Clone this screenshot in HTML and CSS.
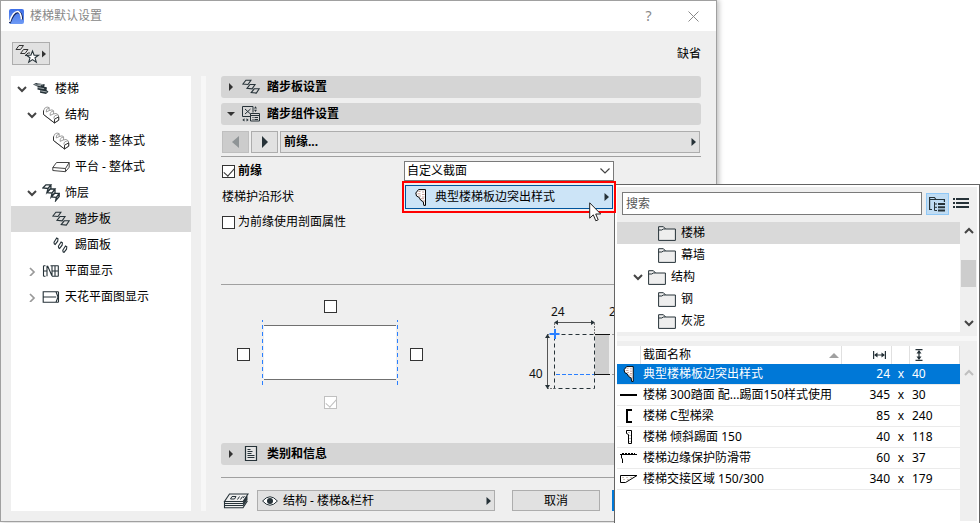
FILE: index.html
```html
<!DOCTYPE html>
<html lang="zh-CN">
<head>
<meta charset="UTF-8">
<meta name="viewport" content="width=device-width, initial-scale=1.0">
<title>楼梯默认设置</title>
<link rel="stylesheet" href="styles.css">
</head>

<body>

<!-- ICONS -->
<svg class="defs" width="0" height="0">
  <symbol id="tread" viewBox="0 0 18 16">
    <path d="M.9 5L3.900 1.200h5L6 5.500zM5 9.300l3-3.800h5l-2.900 4.300zM9.200 13.600l3-3.800h5l-2.900 4.300z" fill="none" stroke="currentColor" stroke-width="1.100"/>
  </symbol>
  <symbol id="riser" viewBox="0 0 18 16">
    <path d="M2 5.300L4.700 1l1.300.8-.3 2.400L3.200 7.400l-.9-.6zM6.400 9.300L9.100 5l1.300.8-.3 2.400-2.500 3.200-.9-.6zM10.800 13.300L13.500 9l1.300.8-.3 2.400-2.500 3.200-.9-.6z" fill="none" stroke="currentColor" stroke-width="1.100"/>
  </symbol>
  <symbol id="finish" viewBox="0 0 18 18">
    <path d="M.9 4L3.900.8h5L6 4.500zM5 8.600l3-3.600h5l-2.900 4zM9.200 13l3-3.600h5l-2.900 4zM6 4.500L5 8.600l3.900-4.200V.8M10.100 9l-.9 4 3.800-4V5M14.300 13.400l-.6 3.200 3.500-4.200v-3" fill="none" stroke="currentColor" stroke-width="1.300"/>
  </symbol>
  <symbol id="stair" viewBox="0 0 18 16">
    <path d="M1 3.500L4 2l9 1.500-1 2 3 1-.5 2.500 2 1.800L14 13l-6-1.200.4-2.600-3-.8.400-2.700z" fill="#263238"/>
    <path d="M2.500 3.600l6.500 1.200M6.200 6.600l6 1.100M8.800 9.900l6 1.100M5.500 2.900l5.500 1" stroke="#c4cacc" stroke-width=".8"/>
  </symbol>
  <symbol id="structure" viewBox="0 0 18 18">
    <path d="M1.500 5Q2 1.500 5 1l2.200.6v3L10 3.800l1.600 1V8l2.500-.6L16.500 9v5l-4 3-11-8.500z" fill="#fff" stroke="#888" stroke-width=".8"/>
    <path d="M7 2Q3.800 2.500 4.200 6M11.500 5Q7.700 5.500 8.200 9.400M15.900 9Q11.500 9 12 12.600M4.200 6L7.200 4.600M8.200 9.400l3.400-1.600" fill="none" stroke="#888" stroke-width=".8"/>
    <path d="M1.500 4.500V8.500L12.500 17 16.800 14.200V10.800L12.500 13.200V17" fill="none" stroke="#333"/>
  </symbol>
  <symbol id="landing" viewBox="0 0 18 12">
    <path d="M.8 6.500L4.500 1.500h12.700L13.500 7.500zM.8 6.500v3l12.700 1.200V7.500M13.500 10.700l3.700-4.500V1.500" fill="none" stroke="#444"/>
  </symbol>
  <symbol id="plan" viewBox="0 0 17 12">
    <path d="M1 .8v10.400M4.500.8v10.400M1 6h3.500M1 .8h2M1 11.200h2M9.500.8v10.400M12.500.8v10.400M15.800.8v10.400M8 .8h8M9.500 6h6.300M9.500 11.200h6.500M5 .8l4.300 9.700" fill="none" stroke="currentColor" stroke-width="1.100"/>
  </symbol>
  <symbol id="ceiling" viewBox="0 0 17 12">
    <path d="M16 .7H.7v10.600H16M.7 6h13M13.500.7L15.500 6l-2 5.300M16 .7v10.600" fill="none" stroke="currentColor" stroke-width="1.100"/>
  </symbol>
  <symbol id="down" viewBox="0 0 10 10">
    <path d="M1 3l4 4 4-4" fill="none" stroke="currentColor" stroke-width="2"/>
  </symbol>
  <symbol id="closed" viewBox="0 0 10 10">
    <path d="M3 2l4 4-4 4" fill="none" stroke="currentColor" stroke-width="1.700"/>
  </symbol>
  <symbol id="right" viewBox="0 0 5 8"><path d="M.5 0v8L5 4z" fill="currentColor"/></symbol>
  <symbol id="folder" viewBox="0 0 18 15">
    <path d="M.6 14.400V.7h4.800L7.600 3h9.800v11.400z" fill="#eee" stroke="#263238"/>
    <path d="M.6 4h3.200l1.500-1h2.300" fill="none" stroke="#263238"/>
  </symbol>
  <symbol id="nosing" viewBox="0 0 12 17">
    <path d="M10.500.6v15.800H8.800L8.300 12.800 5.500 11 4.300 8.500 1.500 7 .8 4 3.500.6z" fill="#fff" stroke="#000"/>
    <path d="M3.500 2.500h2M7 3h2M2.500 4.800h3M7 5.500h2.500M3.500 7h2.500M7 8h2.500M6 9.700h3M8 12h2" fill="none" stroke="#b98a80" stroke-width=".8"/>
  </symbol>
</svg>

<main class="dialog">
  <header class="titlebar">
    <svg class="logo" width="15" height="15" viewBox="0 0 15 15">
      <defs><linearGradient id="blue" x2="0" y2="1"><stop stop-color="#3d6fe8"/><stop offset="1" stop-color="#6f9bf5"/></linearGradient></defs>
      <rect width="15" height="15" rx="2" fill="url(#blue)"/>
      <path d="M.5 14Q5 2.500 9.500 3.200q3 .8 3.500 7.300" fill="none" stroke="#12225c" stroke-width="2.400"/>
      <path d="M.5 13Q4 2 9 2.500q3 .8 3.400 8" fill="none" stroke="#fff" stroke-width="1.600"/>
    </svg>
    <h1>楼梯默认设置</h1>
    <button class="win-btn" aria-label="帮助">?</button>
    <button class="win-btn" aria-label="关闭">
      <svg width="11" height="11" viewBox="0 0 11 11"><path d="M.5.5l10 10M10.500.5l-10 10" stroke="#888"/></svg>
    </button>
  </header>

  <div class="toolbar">
    <button class="fav-btn" aria-label="收藏夹">
      <svg width="34" height="20" viewBox="0 0 34 20">
        <path d="M3 5.500L6 1.500h4.500l-3 4zM7.500 9.500l3-4H15l-3 4zM12 12l3-3h2" fill="none" stroke="#333"/>
        <path d="M19.500 7l1.600 4.200h4.400l-3.500 2.600 1.300 4.400-3.800-2.600-3.800 2.600 1.300-4.400-3.500-2.600h4.400z" fill="#fff" stroke="#263238" stroke-width="1.100"/>
        <path d="M29 6.500v7l4-3.500z" fill="#333"/>
      </svg>
    </button>
    <span>缺省</span>
  </div>

  <div class="body">
    <nav class="tree">
      <a href="#" class="node"><svg class="chev"><use href="#down"/></svg><svg class="ico"><use href="#stair"/></svg>楼梯</a>
      <a href="#" class="node lv1"><svg class="chev"><use href="#down"/></svg><svg class="ico tall"><use href="#structure"/></svg>结构</a>
      <a href="#" class="node lv2"><svg class="ico tall"><use href="#structure"/></svg>楼梯 - 整体式</a>
      <a href="#" class="node lv2"><svg class="ico flat"><use href="#landing"/></svg>平台 - 整体式</a>
      <a href="#" class="node lv1"><svg class="chev"><use href="#down"/></svg><svg class="ico tall"><use href="#finish"/></svg>饰层</a>
      <a href="#" class="node lv2 active"><svg class="ico"><use href="#tread"/></svg>踏步板</a>
      <a href="#" class="node lv2"><svg class="ico"><use href="#riser"/></svg>踢面板</a>
      <a href="#" class="node lv1"><svg class="chev closed"><use href="#closed"/></svg><svg class="ico flat"><use href="#plan"/></svg>平面显示</a>
      <a href="#" class="node lv1"><svg class="chev closed"><use href="#closed"/></svg><svg class="ico flat"><use href="#ceiling"/></svg>天花平面图显示</a>
    </nav>
    <div class="splitter"></div>

    <div class="content">
      <button class="section">
        <svg class="mark" viewBox="0 0 8 8"><path d="M2 0v8l4-4z"/></svg>
        <svg class="ico"><use href="#tread"/></svg>踏步板设置
      </button>
      <button class="section">
        <svg class="mark" viewBox="0 0 8 8"><path d="M0 2h8L4 6z"/></svg>
        <svg class="ico tall" viewBox="0 0 18 18">
          <path d="M8 11.500H.5v-10h10.500v6M3 4l5.500 5M8.500 4L3 9M8.500 8.500h9v7.500h-9zM8.500 10.500h9M10.500 12.500h1M12.500 12.500h3.500M10.500 14.500h1M12.500 14.500h3.500" fill="none" stroke="#263238"/>
          <path d="M12 3.500l1.500-2.200L15 3.500zM12 4.800l1.500 2.200L15 4.800zM2.500 13.200v3.400L.3 15zM4.500 13.200v3.400L6.700 15z" fill="#263238"/>
        </svg>踏步组件设置
      </button>

      <div class="pager">
        <button disabled aria-label="上一个"><svg width="8" height="12" viewBox="0 0 8 12"><path d="M7 0v12L0 6z" fill="#8f9496"/></svg></button>
        <button aria-label="下一个"><svg width="8" height="12" viewBox="0 0 8 12"><path d="M1 0v12l6-6z" fill="#263238"/></svg></button>
        <button class="page-name">前缘...<svg class="arrow"><use href="#right"/></svg></button>
      </div>

      <div class="form">
        <label class="check bold"><input type="checkbox" checked>前缘</label>
        <div class="select">
          <select aria-label="前缘"><option>自定义截面</option></select>
          <svg width="10" height="6" viewBox="0 0 10 6"><path d="M.5.5L5 5 9.500.5" fill="none" stroke="#444" stroke-width="1.200"/></svg>
        </div>
        <label class="caption" for="profile">楼梯护沿形状</label>
        <div class="picker">
          <button id="profile"><svg width="12" height="17"><use href="#nosing"/></svg>典型楼梯板边突出样式<svg class="arrow"><use href="#right"/></svg></button>
          <svg class="cursor" width="13" height="20" viewBox="0 0 13 20"><path d="M.7.8v15.400l3.600-3.400 2.500 6 2.400-1-2.500-5.800h5z" fill="#fff" stroke="#222"/></svg>
        </div>
        <label class="check wide"><input type="checkbox">为前缘使用剖面属性</label>
      </div>

      <div class="diagram">
        <div class="edges">
          <input class="top" type="checkbox" aria-label="后边">
          <input type="checkbox" aria-label="左边">
          <svg viewBox="0 0 136 69" width="136" height="69">
            <path d="M2 5h132v55H2z" fill="#fff"/>
            <path d="M2 5.500h132M2 59.500h132" stroke="#707070"/>
            <path d="M.5 0v65M135.500 0v65" stroke="#2a7fff" stroke-dasharray="4 3" stroke-dashoffset="2"/>
          </svg>
          <input type="checkbox" aria-label="右边">
          <input class="bottom" type="checkbox" checked disabled aria-label="前边">
        </div>
        <svg class="profile" width="174" height="109" viewBox="0 0 174 109">
          <path d="M69 35h14v40H69z" fill="#cfcfcf"/>
          <path d="M28.500 23v11M68.500 23v11M21 34.500h7M21 88.500h7" stroke="#777" stroke-dasharray="2 1"/>
          <path d="M28.500 34.500h40v54h-40z" fill="none" stroke="#263238" stroke-dasharray="4 3"/>
          <path d="M30 74.500h38" stroke="#2a7fff" stroke-dasharray="4 2"/>
          <path d="M69 34.500h15M69 74.500h15" stroke="#111"/>
          <path d="M86 34.500h5M86 74.500h5" stroke="#999" stroke-dasharray="2 1"/>
          <path d="M30 22.500h37M21.500 37v49" stroke="#555"/>
          <path d="M28 22.500l4-2.500v5zM69 22.500l-4-2.500v5zM21.500 34l-2.500 4h5zM21.500 89l-2.500-4h5z" fill="#263238"/>
          <path d="M23.500 34h10M29 29v10" stroke="#2a7fff" stroke-width="2"/>
          <text x="25" y="16">24</text><text x="3" y="78">40</text><text x="83" y="16">2</text>
        </svg>
      </div>

      <button class="section info">
        <svg class="mark" viewBox="0 0 8 8"><path d="M2 0v8l4-4z"/></svg>
        <svg class="ico tall" viewBox="0 0 18 18"><path d="M3.500 1.500h11v14h-11z" fill="#e4e4e4" stroke="#263238" stroke-width="1.200"/><path d="M5.500 4.500h3M5.500 6.500h5M5.500 8.500h4M5.500 10.500h7M5.500 12.500h7" stroke="#263238"/></svg>类别和信息
      </button>

      <footer class="actions">
        <svg width="26" height="16" viewBox="0 0 26 16">
          <path d="M6.500 1h18.500l-5 7.500H1.500zM1.500 8.500v2h18.500l4.500-7M1.500 10.500v2h18.500l4.500-7M1.500 12.500v2.300h18.500l4.500-7" fill="none" stroke="#263238" stroke-width="1.100"/>
          <path d="M9 3.500h4L11.500 6h-4zM14.500 6.500l2-3M17.500 6.500l2-3M20 5l1.500-2" fill="none" stroke="#263238"/>
        </svg>
        <button class="layer">
          <svg width="16" height="10" viewBox="0 0 16 10"><path d="M.6 5Q8-3.500 15.400 5 8 13.500.6 5z" fill="#fff" stroke="#263238"/><circle cx="8" cy="5" r="3" fill="#263238"/></svg>
          结构 - 楼梯&amp;栏杆<svg class="arrow"><use href="#right"/></svg>
        </button>
        <button class="cancel">取消</button>
        <button class="ok" aria-label="确定"></button>
      </footer>
    </div>
  </div>
</main>

<!-- PROFILE POPUP -->
<aside class="popup">
  <div class="search">
    <input type="text" placeholder="搜索" aria-label="搜索">
    <button class="view on" aria-label="树状视图">
      <svg width="17" height="16" viewBox="0 0 17 16"><path d="M3 13.500H.6V1.500h4.800l1.600 2h8.400v2.500M.6 3.500h6" fill="none" stroke="#263238" stroke-width="1.200"/><path d="M5.500 6v8.500h2.500M5.500 8h2.500M5.500 11.300h2.500" fill="none" stroke="#263238"/><path d="M9 8h7M9 11.300h7M9 14.500h7" stroke="#263238" stroke-width="2"/></svg>
    </button>
    <button class="view" aria-label="列表视图">
      <svg width="16" height="12" viewBox="0 0 16 12"><path d="M0 1h2M3 1h13M0 5h2M3 5h13M0 9h2M3 9h13" stroke="#263238" stroke-width="2"/></svg>
    </button>
  </div>

  <div class="pane">
    <div class="folders">
      <a href="#" class="folder sub active"><svg class="fold"><use href="#folder"/></svg>楼梯</a>
      <a href="#" class="folder sub"><svg class="fold"><use href="#folder"/></svg>幕墙</a>
      <a href="#" class="folder"><svg class="chev"><use href="#down"/></svg><svg class="fold"><use href="#folder"/></svg>结构</a>
      <a href="#" class="folder sub"><svg class="fold"><use href="#folder"/></svg>钢</a>
      <a href="#" class="folder sub"><svg class="fold"><use href="#folder"/></svg>灰泥</a>
    </div>
    <div class="scroll">
      <svg class="chev flip"><use href="#down"/></svg>
      <div class="thumb"></div>
      <svg class="chev"><use href="#down"/></svg>
    </div>
  </div>
  <div class="bar"></div>

  <div class="pane list">
    <div class="rows">
      <table>
        <colgroup><col class="c-icon"><col><col class="c-w"><col class="c-x"><col class="c-h"></colgroup>
        <thead>
          <tr>
            <th></th>
            <th><div class="sort">截面名称<svg width="10" height="5" viewBox="0 0 10 5"><path d="M5 0l5 5H0z" fill="#a0a0a0"/></svg></div></th>
            <th class="num"><svg width="13" height="8" viewBox="0 0 13 8"><path d="M.6 0v8M12.400 0v8M2 4h9" stroke="#263238" stroke-width="1.200"/><path d="M1 4l3.500-2.500v5zM12 4L8.500 1.500v5z" fill="#263238"/></svg></th>
            <th></th>
            <th class="height"><svg width="8" height="12" viewBox="0 0 8 12"><path d="M.5.700h7M.5 11.300h7M4 2v8" stroke="#263238" stroke-width="1.200"/><path d="M4 1L1.500 4.500h5zM4 11L1.500 7.500h5z" fill="#263238"/></svg></th>
          </tr>
        </thead>
        <tbody>
          <tr class="active"><td><svg width="12" height="16"><use href="#nosing"/></svg></td><td>典型楼梯板边突出样式</td><td class="num">24</td><td class="x">x</td><td>40</td></tr>
          <tr><td><svg width="18" height="16" viewBox="0 0 18 16"><path d="M0 8h17" stroke="#000" stroke-width="2"/></svg></td><td>楼梯 300踏面 配...踢面150样式使用</td><td class="num">345</td><td class="x">x</td><td>30</td></tr>
          <tr><td><svg width="18" height="16" viewBox="0 0 18 16"><path d="M12 2H7v12h5" fill="none" stroke="#000" stroke-width="2"/></svg></td><td>楼梯 C型梯梁</td><td class="num">85</td><td class="x">x</td><td>240</td></tr>
          <tr><td><svg width="18" height="16" viewBox="0 0 18 16"><path d="M6.500 1.500h5v13h-3v-9l-2-1z" fill="#fff" stroke="#000"/><path d="M8.500 3.500h2M10 6v7" stroke="#777" stroke-dasharray="1 2"/></svg></td><td>楼梯 倾斜踢面 150</td><td class="num">40</td><td class="x">x</td><td>118</td></tr>
          <tr><td><svg width="18" height="16" viewBox="0 0 18 16"><path d="M0 4.500h17M1.500 4v4l1 1v4" fill="none" stroke="#000"/><path d="M2 3.500h13" stroke="#000" stroke-dasharray="2 1"/></svg></td><td>楼梯边缘保护防滑带</td><td class="num">60</td><td class="x">x</td><td>37</td></tr>
          <tr><td><svg width="18" height="16" viewBox="0 0 18 16"><path d="M.5 4.500h16.500L5.500 11.500h-5z" fill="#fff" stroke="#000"/><path d="M2.500 6.500h9M3.500 8.500h5" stroke="#a08870" stroke-dasharray="1 3"/></svg></td><td>楼梯交接区域 150/300</td><td class="num">340</td><td class="x">x</td><td>179</td></tr>
        </tbody>
      </table>
    </div>
    <div class="scroll off"><svg class="chev flip"><use href="#down"/></svg></div>
  </div>
</aside>

</body>
</html>
```

FILE: styles.css
```css
*{box-sizing:border-box;}

body{
    margin:0;
    min-height:100vh;
    position:relative;
    overflow:hidden;
    background:#fff;
    color:#000;
    font:12px/16px "Noto Sans","Noto Sans CJK SC",sans-serif;
}

button,input,select{
    margin:0;
    font:inherit;
    color:inherit;
}

button{
    padding:0;
    border:1px solid #adadad;
    background:#e1e1e1;
}

a{
    color:inherit;
    text-decoration:none;
}

svg{
    flex:none;
    display:block;
    color:#263238;
}

.defs{position:absolute;}

/* DIALOG */
.dialog{
    width:calc(100% - 263px);
    min-height:calc(100vh - 1px);
    display:flex;
    flex-direction:column;
    background:#efefef;
    border:1px solid #a0a0a0;
    box-shadow:2px 0 5px rgba(0,0,0,0.25);
}

.titlebar{
    display:flex;
    align-items:center;
    height:30px;
    padding-left:8px;
    background:#fff;
    color:#888;
}

.titlebar h1{
    flex:1;
    margin:0 0 0 6px;
    font-size:12px;
    font-weight:normal;
}

.win-btn{
    display:flex;
    justify-content:center;
    align-items:center;
    width:45px;
    height:28px;
    border:0;
    background:none;
    font-size:14px;
}

.toolbar{
    display:flex;
    justify-content:space-between;
    align-items:center;
    height:45px;
    padding:0 15px 0 11px;
}

.fav-btn{
    display:flex;
    align-items:center;
    width:38px;
    height:23px;
}

.body{
    flex:1;
    display:flex;
    padding:0 15px 10px 10px;
}

/* TREE */
.tree{
    width:180px;
    background:#fff;
}

.node{
    display:flex;
    align-items:center;
    height:26px;
    padding-left:6px;
}

.node.lv1{padding-left:16px;}
.node.lv2{padding-left:41px;}

.chev{
    width:10px;
    height:10px;
    color:#444;
}

.closed{color:#999;}

.ico{
    width:18px;
    height:16px;
    margin-right:5px;
}

.chev + .ico{margin-left:5px;}

.tall{height:18px;}
.flat{height:12px;}

.active{background:#d9d9d9;}

.splitter{
    width:5px;
    margin:0 15px 0 10px;
    background:#f7f7f7;
}

/* CONTENT */
.content{
    flex:1;
    min-width:0;
    display:flex;
    flex-direction:column;
}

.section{
    display:flex;
    align-items:center;
    width:100%;
    height:22px;
    margin-bottom:5px;
    padding-left:6px;
    border:0;
    border-radius:3px;
    background:#d5d5d5;
    font-weight:bold;
}

.section .ico{margin:0 7px 0 7px;}

.mark{
    width:8px;
    height:8px;
    fill:#333;
}

.pager{
    display:flex;
    gap:2px;
    padding:1px 1px 3px;
    border-bottom:1px solid #a0a0a0;
}

.pager button{
    display:flex;
    justify-content:center;
    align-items:center;
    width:27px;
    height:22px;
}

.pager button:disabled{
    background:#ccc;
    border-color:#bfbfbf;
}

.pager .page-name{
    flex:1;
    justify-content:space-between;
    padding:0 3px;
    font-weight:bold;
}

.arrow{
    width:5px;
    height:8px;
}

.form{
    display:grid;
    grid-template-columns:182px 1fr 87px;
    grid-template-rows:20px 24px 18px;
    row-gap:4px;
    align-items:center;
    padding:4px 0 53px 1px;
    border-bottom:1px solid #a0a0a0;
}

.check{
    display:flex;
    align-items:center;
    gap:3px;
}

.caption{grid-column:1;}
.wide{grid-column:1 / 3;}
.bold{font-weight:bold;}

input[type="checkbox"]{
    appearance:none;
    display:block;
    width:13px;
    height:13px;
    border:1px solid #333;
    background:#fff;
}

input[type="checkbox"]:checked::before{
    content:"";
    display:block;
    width:9px;
    height:5px;
    margin:2px 0 0 1px;
    border:solid #333;
    border-width:0 0 1px 1px;
    transform:rotate(-48deg);
}

input[type="checkbox"]:disabled,
input[type="checkbox"]:disabled::before{
    border-color:#c0c0c0;
}

.select{
    display:grid;
    align-items:center;
}

.select select{
    grid-area:1 / 1;
    appearance:none;
    width:100%;
    height:20px;
    padding:0 2px;
    border:1px solid #7a7a7a;
    border-radius:0;
    background:#fff;
}

.select svg{
    grid-area:1 / 1;
    justify-self:end;
    margin-right:4px;
    pointer-events:none;
}

.picker{
    position:relative;
    padding:0 1px;
}

.picker button{
    display:flex;
    align-items:center;
    gap:8px;
    width:100%;
    height:24px;
    padding:0 3px 0 9px;
    border-color:#00549c;
    background:#cce4f7;
}

.picker .arrow{margin-left:auto;}

.picker::after{
    content:"";
    position:absolute;
    inset:-4px -2px;
    border:2px solid #f00;
    z-index:2;
    pointer-events:none;
}

.cursor{
    position:absolute;
    right:12px;
    top:17px;
    z-index:3;
}

/* DIAGRAM */
.diagram{
    display:flex;
    gap:103px;
    padding:15px 0 34px 16px;
    overflow:hidden;
}

.edges{
    display:grid;
    grid-template-columns:13px 136px 13px;
    gap:7px 12px;
    align-items:center;
    justify-items:center;
}

.edges .top,
.edges .bottom{
    grid-column:1 / 4;
}

.profile text{
    font-size:12px;
    fill:#111;
}

.info{margin-bottom:12px;}

.actions{
    display:flex;
    align-items:center;
    padding:12px 0 0 2px;
    border-top:1px solid #a0a0a0;
}

.actions button{height:21px;}

.actions .layer{
    display:flex;
    align-items:center;
    gap:5px;
    width:238px;
    margin:0 17px 0 8px;
    padding:0 3px 0 4px;
}

.layer .arrow{margin-left:auto;}

.actions .cancel{
    width:88px;
    margin-right:12px;
}

.actions .ok{
    flex:1;
    border-color:#0078d7;
    background:#0078d7;
}

/* POPUP */
.popup{
    position:absolute;
    top:184px;
    right:0;
    bottom:0;
    width:366px;
    display:flex;
    flex-direction:column;
    border:1px solid #646464;
    border-bottom:0;
    background:#efefef;
    box-shadow:inset 0 0 0 2px #fff;
    padding:2px 2px 0;
}

.search{
    display:flex;
    align-items:center;
    padding:5px 5px 7px;
}

.search input{
    flex:1;
    min-width:0;
    height:23px;
    padding:0 3px;
    border:1px solid #7a7a7a;
    background:#fff;
}

.search input::placeholder{color:#555;}

.view{
    display:flex;
    justify-content:center;
    align-items:center;
    width:23px;
    height:22px;
    border-color:transparent;
    background:none;
}

.view.on{
    margin-left:4px;
    border-color:#90c8f6;
    background:#c0dcf3;
}

.pane{display:flex;}

.folders{
    flex:1;
    background:#fff;
}

.folder{
    display:flex;
    align-items:center;
    height:22px;
    padding-left:16px;
}

.folder.sub{padding-left:41px;}

.fold{
    width:18px;
    height:15px;
    margin-right:5px;
}

.chev + .fold{margin-left:5px;}

.scroll{
    display:flex;
    flex-direction:column;
    align-items:center;
    width:17px;
    padding:4px 0;
}

.flip{transform:scaleY(-1);}

.scroll .thumb{
    width:15px;
    height:27px;
    margin:24px 0 auto;
    background:#cdcdcd;
}

.scroll.off{padding-top:22px;}
.scroll.off .chev{color:#bfbfbf;}

.bar{
    height:5px;
    margin:4px 0 5px;
    background:#f7f7f7;
}

.list{flex:1;}

.rows{
    flex:1;
    background:#fff;
}

table{
    width:100%;
    table-layout:fixed;
    border-collapse:separate;
    border-spacing:0;
}

.c-icon{width:24px;}
.c-w{width:50px;}
.c-x{width:18px;}
.c-h{width:50px;}

th{
    height:18px;
    padding:0 2px;
    border-right:1px solid #e0e0e0;
    font-weight:normal;
    text-align:left;
}

.sort{
    display:flex;
    justify-content:space-between;
    align-items:center;
}

td{
    height:21px;
    padding:0 2px;
    border-bottom:1px solid #ebebeb;
    white-space:nowrap;
}

td:first-child{padding:0 3px;}
td svg{margin:0 auto;}

.num{text-align:right;}
th.num svg{margin:0 3px 0 auto;}
th.height{padding-left:5px;}
.x{text-align:center;}

tr.active{background:none;}

tr.active td{
    background:#0078d7;
    background-clip:padding-box;
    color:#fff;
}
```
